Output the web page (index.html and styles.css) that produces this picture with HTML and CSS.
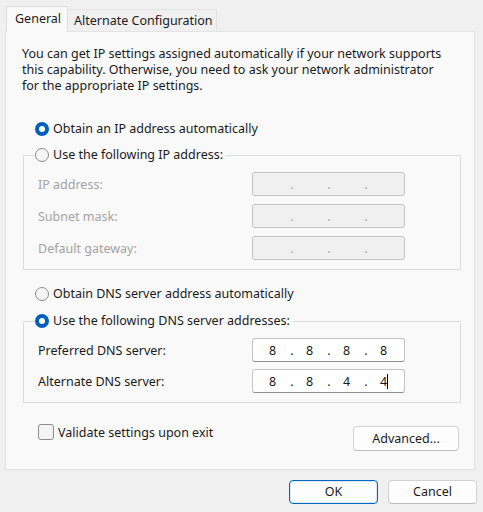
FILE: index.html
```html
<!DOCTYPE html>
<html>
<head>
<meta charset="utf-8">
<link rel="stylesheet" href="styles.css">
</head>
<body>
<div class="dialog">
  <div class="tabs">
    <div class="tab active">General</div>
    <div class="tab">Alternate Configuration</div>
  </div>
  <div class="panel">
    <p class="intro">You can get IP settings assigned automatically if your network supports<br>this capability. Otherwise, you need to ask your network administrator<br>for the appropriate IP settings.</p>

    <div class="opt opt-auto-ip"><span class="radio checked"></span><span>Obtain an IP address automatically</span></div>

    <fieldset class="group group-ip">
      <legend><span class="radio"></span><span>Use the following IP address:</span></legend>
      <div class="rows">
        <div class="row">
          <span class="label disabled">IP address:</span>
          <div class="ip is-disabled"><span class="seg"></span><span class="dot">.</span><span class="seg"></span><span class="dot">.</span><span class="seg"></span><span class="dot">.</span><span class="seg"></span></div>
        </div>
        <div class="row">
          <span class="label disabled">Subnet mask:</span>
          <div class="ip is-disabled"><span class="seg"></span><span class="dot">.</span><span class="seg"></span><span class="dot">.</span><span class="seg"></span><span class="dot">.</span><span class="seg"></span></div>
        </div>
        <div class="row">
          <span class="label disabled">Default gateway:</span>
          <div class="ip is-disabled"><span class="seg"></span><span class="dot">.</span><span class="seg"></span><span class="dot">.</span><span class="seg"></span><span class="dot">.</span><span class="seg"></span></div>
        </div>
      </div>
    </fieldset>

    <div class="opt opt-auto-dns"><span class="radio"></span><span>Obtain DNS server address automatically</span></div>

    <fieldset class="group group-dns">
      <legend><span class="radio checked"></span><span>Use the following DNS server addresses:</span></legend>
      <div class="rows rows-dns">
        <div class="row">
          <span class="label">Preferred DNS server:</span>
          <div class="ip"><span class="seg">8</span><span class="dot">.</span><span class="seg">8</span><span class="dot">.</span><span class="seg">8</span><span class="dot">.</span><span class="seg">8</span></div>
        </div>
        <div class="row">
          <span class="label">Alternate DNS server:</span>
          <div class="ip"><span class="seg">8</span><span class="dot">.</span><span class="seg">8</span><span class="dot">.</span><span class="seg">4</span><span class="dot">.</span><span class="seg">4<span class="caret"></span></span></div>
        </div>
      </div>
    </fieldset>

    <div class="bottom-row">
      <div class="check-opt"><span class="checkbox"></span><span>Validate settings upon exit</span></div>
      <button class="btn btn-adv">Advanced...</button>
    </div>
  </div>
  <div class="footer">
    <button class="btn btn-ok">OK</button>
    <button class="btn btn-cancel">Cancel</button>
  </div>
</div>
</body>
</html>
```

FILE: styles.css
```css
* { box-sizing: border-box; }
html, body {
  margin: 0;
  padding: 0;
  background: #f0f0f0;
}
body {
  width: 483px;
  height: 512px;
  overflow: hidden;
  font-family: "Noto Sans", "Open Sans", sans-serif;
  font-size: 12.5px;
  color: #1b1b1b;
}
.dialog {
  padding: 6px 8px 0 5px;
}
.tabs {
  display: flex;
  align-items: flex-end;
  height: 25px;
  padding-left: 1px;
}
.tab {
  border: 1px solid #e2e2e2;
  border-bottom: none;
  background: #f0f0f0;
  height: 22px;
  line-height: 21px;
  padding: 0 6px;
  white-space: nowrap;
}
.tab.active {
  position: relative;
  z-index: 1;
  background: #f9f9f9;
  height: 26px;
  margin-bottom: -1px;
  line-height: 23px;
  width: 62px;
  padding: 0 0 0 8px;
  border-color: #dedede;
}
.tab + .tab {
  width: 149px;
  border-left: none;
  line-height: 21px;
}
.panel {
  background: #f9f9f9;
  border: 1px solid #e3e3e3;
  padding: 14px 13px 18px 16px;
}
.intro {
  margin: 0;
  line-height: 16px;
  white-space: nowrap;
}
.opt {
  display: flex;
  align-items: center;
  height: 16px;
  line-height: 16px;
  padding-left: 13px;
  gap: 4px;
  white-space: nowrap;
}
.opt-auto-ip { margin-top: 27px; }
.opt-auto-dns { margin-top: 16px; }
.radio {
  display: inline-block;
  width: 14px;
  height: 14px;
  border-radius: 50%;
  border: 1px solid #8b8b8b;
  background: #f6f6f6;
  flex: none;
}
.radio.checked {
  border: 4px solid #005fb8;
  background: #ffffff;
}
.group {
  margin: 0 0 0 1px;
  padding: 0;
  min-width: 0;
  border: 1px solid #dcdcdc;
}
.group-ip { margin-top: 10px; }
.group-dns { margin-top: 11px; }
.group legend {
  display: flex;
  align-items: center;
  gap: 4px;
  height: 16px;
  line-height: 16px;
  margin-left: 11px;
  padding: 0 3px 0 0;
  white-space: nowrap;
}
.rows {
  display: flex;
  flex-direction: column;
  gap: 8px;
  padding: 9px 55px 9px 14px;
}
.rows-dns { gap: 7px; }
.row {
  display: flex;
  align-items: center;
  justify-content: space-between;
  height: 24px;
}
.label.disabled { color: #a3a3a3; }
.ip {
  width: 153px;
  height: 24px;
  display: flex;
  align-items: center;
  padding-left: 5px;
  background: #ffffff;
  border: 1px solid #c4c4c4;
  border-bottom-color: #8f8f8f;
  border-radius: 3px;
  font-family: "Noto Sans", sans-serif;
  font-size: 12.5px;
  color: #1a1a1a;
}
.ip.is-disabled {
  background: #f0f0f0;
  border-color: #c2c2c2;
  color: #a0a0a0;
}
.seg {
  width: 29px;
  text-align: center;
  position: relative;
}
.dot {
  width: 8px;
  text-align: center;
  padding-left: 2px;
}
.caret {
  position: absolute;
  top: 1px;
  width: 1px;
  height: 15px;
  background: #000;
}
.bottom-row {
  display: flex;
  justify-content: space-between;
  align-items: flex-start;
  margin-top: 21px;
  padding-right: 2px;
}
.check-opt {
  display: flex;
  align-items: center;
  gap: 4px;
  height: 16px;
  padding-left: 16px;
  white-space: nowrap;
}
.checkbox {
  display: inline-block;
  width: 16px;
  height: 16px;
  border: 1px solid #8b8b8b;
  border-radius: 3px;
  background: #f4f4f4;
}
.btn {
  font-family: inherit;
  font-size: 12.5px;
  color: #1b1b1b;
  background: #fdfdfd;
  border: 1px solid #d3d3d3;
  border-bottom-color: #bdbdbd;
  border-radius: 4px;
  padding: 0;
  margin: 0;
  height: 24px;
  line-height: 20px;
}
.btn-adv {
  width: 106px;
  height: 25px;
  margin-top: 2px;
}
.footer {
  display: flex;
  justify-content: flex-end;
  gap: 10px;
  margin-top: 10px;
  margin-right: -2px;
}
.btn-ok, .btn-cancel { width: 89px; }
.btn-ok {
  border: 1px solid #0067c0;
  box-shadow: inset 0 0 0 1px #d9e8f7;
}
```
